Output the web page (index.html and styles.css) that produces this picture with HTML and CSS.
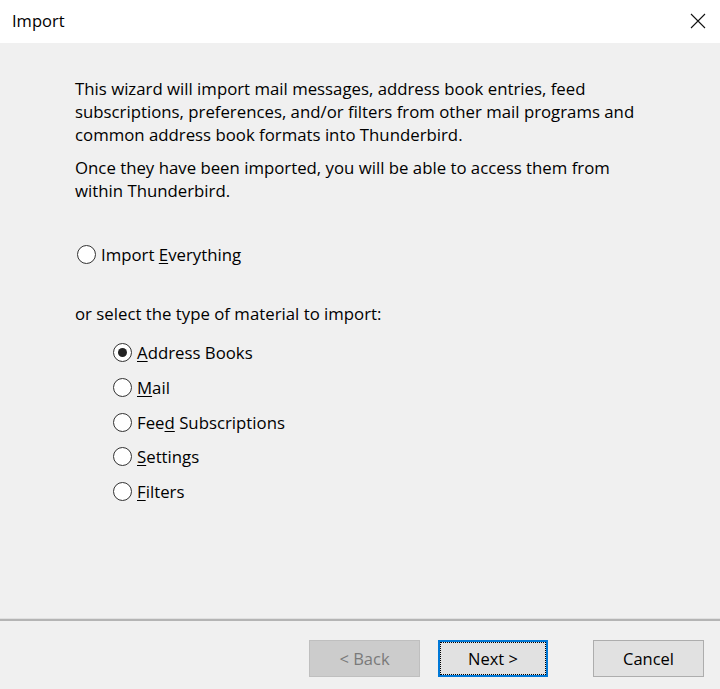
FILE: index.html
```html
<!DOCTYPE html>
<html>
<head>
<meta charset="utf-8">
<link rel="stylesheet" href="styles.css">
</head>
<body>
<div class="window">
  <div class="titlebar">
    <span class="title">Import</span>
    <svg class="close" width="16" height="16" viewBox="0 0 16 16"><path d="M1 1 L15 15 M15 1 L1 15" stroke="#111" stroke-width="1.1" fill="none"/></svg>
  </div>
  <div class="content">
    <p class="para">This wizard will import mail messages, address book entries, feed subscriptions, preferences, and/or filters from other mail programs and common address book formats into Thunderbird.</p>
    <p class="para second">Once they have been imported, you will be able to access them from within Thunderbird.</p>
    <label class="radio everything"><span class="circle"></span><span>Import <u>E</u>verything</span></label>
    <p class="select-label">or select the type of material to import:</p>
    <div class="list">
      <label class="radio"><span class="circle checked"></span><span><u>A</u>ddress Books</span></label>
      <label class="radio"><span class="circle"></span><span><u>M</u>ail</span></label>
      <label class="radio"><span class="circle"></span><span>Fee<u>d</u> Subscriptions</span></label>
      <label class="radio"><span class="circle"></span><span><u>S</u>ettings</span></label>
      <label class="radio"><span class="circle"></span><span><u>F</u>ilters</span></label>
    </div>
  </div>
  <div class="footer">
    <div class="buttons">
      <button class="btn disabled">&lt; Back</button>
      <button class="btn default">Next &gt;</button>
      <button class="btn cancel">Cancel</button>
    </div>
  </div>
</div>
</body>
</html>
```
FILE: styles.css
```css
html, body {
  margin: 0;
  padding: 0;
}
body {
  width: 720px;
  height: 689px;
  overflow: hidden;
  font-family: "Open Sans", "Noto Sans", sans-serif;
  font-size: 16.8px;
  color: #000;
  background: #f0f0f0;
}
.window {
  display: flex;
  flex-direction: column;
  height: 689px;
}
.titlebar {
  height: 43px;
  background: #fff;
  display: flex;
  align-items: center;
  justify-content: space-between;
  padding: 0 14px 0 12px;
  flex: none;
}
.title {
  font-size: 16.5px;
  margin-top: -2px;
}
.close {
  margin-top: -2px;
}
.content {
  flex: 1;
  padding: 34px 65px 0 75px;
  display: flex;
  flex-direction: column;
}
.para {
  margin: 0;
  line-height: 23px;
}
.second {
  margin-top: 10px;
}
.radio {
  display: flex;
  align-items: center;
  gap: 5px;
  height: 23px;
  line-height: 23px;
}
.circle {
  width: 19px;
  height: 19px;
  box-sizing: border-box;
  border: 1.5px solid #333;
  border-radius: 50%;
  background: #fff;
  position: relative;
  flex: none;
}
.circle.checked::after {
  content: "";
  position: absolute;
  left: 3.5px;
  top: 3.5px;
  width: 9px;
  height: 9px;
  border-radius: 50%;
  background: #222;
}
.everything {
  margin-top: 41px;
  margin-left: 2px;
}
.select-label {
  margin: 36px 0 0 0;
  line-height: 23px;
}
.list {
  margin-top: 16px;
  margin-left: 38px;
  display: flex;
  flex-direction: column;
  gap: 11.75px;
}
u {
  text-decoration-thickness: 1px;
  text-underline-offset: 2px;
}
.footer {
  flex: none;
  border-top: 1px solid #e0e0e0;
}
.footer::before {
  content: "";
  display: block;
  height: 2px;
  background: #b4b4b4;
}
.buttons {
  display: flex;
  padding: 19px 16px 12px 0;
  justify-content: flex-end;
}
.btn {
  font-family: inherit;
  font-size: 16.5px;
  height: 37px;
  width: 111px;
  box-sizing: border-box;
  background: #e1e1e1;
  border: 1px solid #adadad;
  color: #000;
  padding: 0;
  margin: 0;
}
.btn.disabled {
  background: #cccccc;
  border-color: #bfbfbf;
  color: #7a7a7a;
}
.btn.default {
  width: 110px;
  margin-left: 18px;
  border: 2px solid #0078d7;
  outline: 1px dotted #000;
  outline-offset: -3px;
}
.btn.cancel {
  margin-left: 45px;
}
```
